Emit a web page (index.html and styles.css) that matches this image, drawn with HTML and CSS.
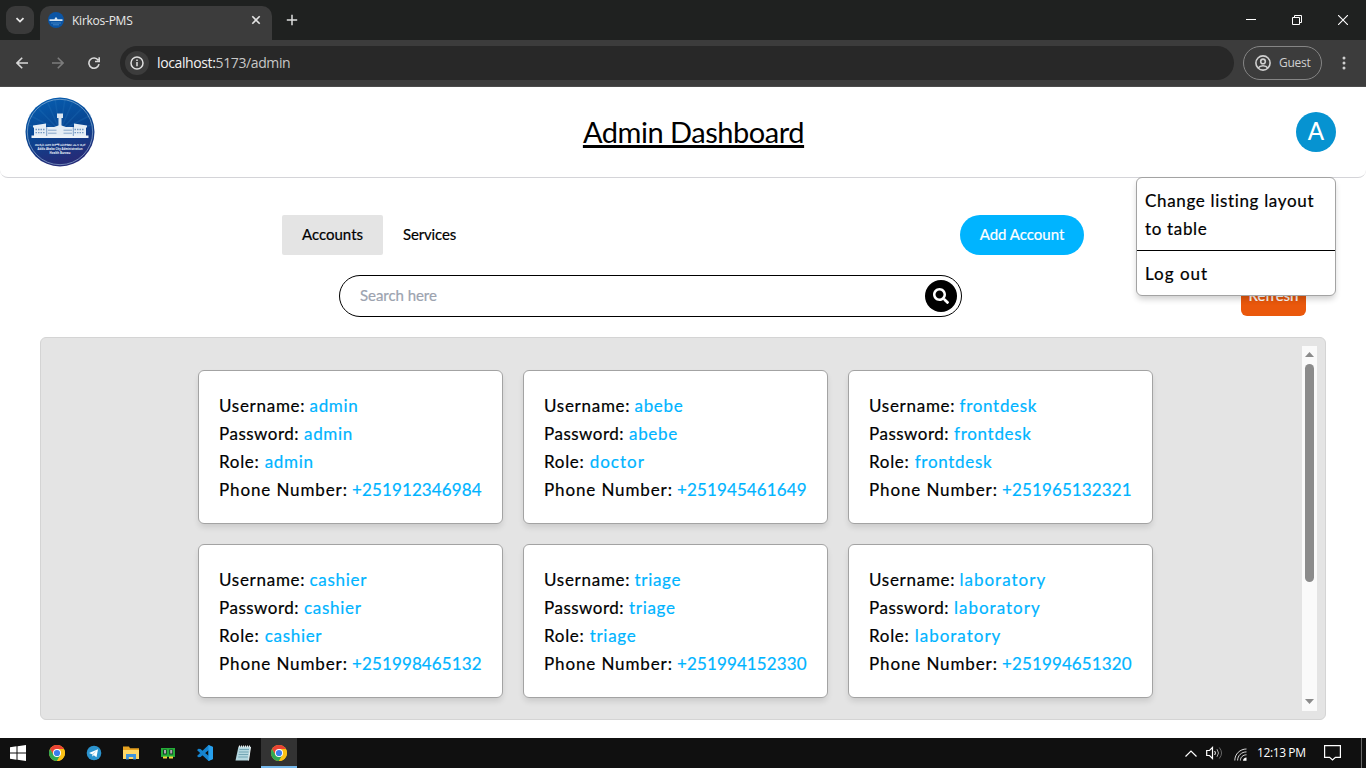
FILE: index.html
```html
<!DOCTYPE html>
<html lang="en">
<head>
<meta charset="utf-8">
<title>Kirkos-PMS</title>
<link rel="stylesheet" href="styles.css">
</head>
<body>
<svg class="defs" width="0" height="0" aria-hidden="true">
  <defs>
    <linearGradient id="sealBlue" x1="0" y1="0" x2="0.3" y2="1"><stop offset="0" stop-color="#0660b4"/><stop offset="0.55" stop-color="#084692"/><stop offset="1" stop-color="#252c78"/></linearGradient>
    <symbol id="chrome" viewBox="0 0 16 16">
      <circle cx="8" cy="8" r="8" fill="#fbc116"/>
      <path d="M1.07 4A8 8 0 0 1 14.93 4H8L4.5 10Z" fill="#ea4335"/>
      <path d="M1.07 4A8 8 0 0 0 8 16L11.5 10H4.54Z" fill="#31a853"/>
      <path d="M14.93 4A8 8 0 0 1 8 16L11.5 10A4 4 0 0 0 8 4Z" fill="#fbc116"/>
      <circle cx="8" cy="8" r="4" fill="#fff"/><circle cx="8" cy="8" r="3.1" fill="#3b7ded"/>
    </symbol>
  </defs>
</svg>
<div class="screen">
  <div class="tabstrip">
    <div class="tab-search"><svg width="10" height="10" viewBox="0 0 10 10"><path d="M1.5 3.2 5 6.6 8.5 3.2" fill="none" stroke="#e8e8e8" stroke-width="1.8"/></svg></div>
    <div class="tab">
      <svg width="16" height="16" viewBox="0 0 16 16"><circle cx="8" cy="8" r="8" fill="#0b55a5"/><path d="M1.500 9V7.300h5l.7-1.800h1.600l.7 1.800h5V9z" fill="#d3e4f3"/><path d="M3 11h10M5 12.800h6" stroke="#4f91cb" stroke-width=".8"/></svg>
      <span class="tab-title">Kirkos-PMS</span>
      <svg class="tab-close" width="10" height="10" viewBox="0 0 10 10"><path d="m1.3 1.3 7.4 7.4m0-7.4L1.3 8.7" stroke="#e3e3e3" stroke-width="1.6"/></svg>
    </div>
    <svg class="new-tab" width="12" height="12" viewBox="0 0 12 12"><path d="M6 .8v10.4M.8 6h10.4" stroke="#dedede" stroke-width="1.5"/></svg>
    <div class="window-buttons">
      <svg width="10" height="10" viewBox="0 0 10 10"><path d="M0 4.5h10" stroke="#fff"/></svg>
      <svg width="10" height="10" viewBox="0 0 10 10"><path d="M.5 2.5h7v7h-7zM2.5 2.5v-2h7v7h-2" fill="none" stroke="#fff"/></svg>
      <svg width="10" height="10" viewBox="0 0 10 10"><path d="m0 0 10 10M10 0 0 10" stroke="#fff" stroke-width="1.1"/></svg>
    </div>
  </div>
  <div class="toolbar">
    <div class="nav">
      <svg width="12" height="12" viewBox="0 0 12 12"><path d="M12 6H1.2M6.2.8 1 6l5.2 5.2" fill="none" stroke="#d8d8d8" stroke-width="1.6"/></svg>
      <svg width="12" height="12" viewBox="0 0 12 12"><path d="M0 6h10.8M5.8.8 11 6l-5.2 5.2" fill="none" stroke="#7c7c7c" stroke-width="1.6"/></svg>
      <svg width="12" height="12" viewBox="0 0 12 12"><path d="M10.2 3.2A5.1 5.1 0 1 0 11 7.2M11.2.3v4.2H7" fill="none" stroke="#d8d8d8" stroke-width="1.6"/></svg>
    </div>
    <div class="omnibox">
      <span class="site-info"><svg width="14" height="14" viewBox="0 0 14 14"><circle cx="7" cy="7" r="6" fill="none" stroke="#dfdfdf" stroke-width="1.5"/><path d="M7 6v4.3M7 3.5v1.6" stroke="#dfdfdf" stroke-width="1.5"/></svg></span>
      <span class="url"><b>localhost:</b>5173/admin</span>
    </div>
    <div class="guest">
      <svg width="16" height="16" viewBox="0 0 16 16" fill="none" stroke="#d0d0d0" stroke-width="1.6"><circle cx="8" cy="8" r="7.1"/><circle cx="8" cy="6.4" r="2.3"/><path d="M3.2 13c2-3 7.6-3 9.600 0"/></svg>
      <span>Guest</span>
    </div>
    <svg class="kebab" width="4" height="14" viewBox="0 0 4 14" fill="#cfcfcf"><circle cx="2" cy="2" r="1.5"/><circle cx="2" cy="7" r="1.5"/><circle cx="2" cy="12" r="1.5"/></svg>
  </div>

  <header class="header">
    <svg class="seal" width="70" height="70" viewBox="0 0 70 70">
      <circle cx="35" cy="35" r="34.5" fill="url(#sealBlue)"/>
      <path d="M35 34 22 4M35 34 30 2M35 34 40 2M35 34 48 4M35 34 12 10M35 34 58 10M35 34 4 18M35 34 66 18M35 34 2 28M35 34 68 28" stroke="#2878bd" stroke-width="1.5" opacity=".25"/>
      <circle cx="35" cy="35" r="32.7" fill="none" stroke="#a5c3dd" stroke-width=".6"/>
      <path d="M33.500 38V21H32v-4.500h6V21h-1.500v17z" fill="#dbe6f1"/>
      <path d="M8 28.500 21 26.500v3.500h8l6-2 6 2h8v-3.500l13 2V30l-1 1v8H9v-8l-1-1z" fill="#e5edf5"/>
      <path d="M6.500 38.500h57V41h-57z" fill="#eef3f8"/>
      <path d="M10.500 32.500h10m-10 3.200h10m29-3.200h10m-10 3.200h10" stroke="#7399c2" stroke-width="1.300" stroke-dasharray="1.500 1"/>
      <path d="M23 33.200h8.500m7 0H47M23 36.200h8.500m7 0H47" stroke="#7b9dc4" stroke-width=".9"/>
      <path d="M21.700 30v9M48.300 30v9" stroke="#4c7bb1" stroke-width=".7"/>
      <text x="35" y="48.800" class="seal-am" textLength="50" lengthAdjust="spacingAndGlyphs">በአዲስ አበባ ከተማ አስተዳደር ጤና ቢሮ</text>
      <text x="35" y="53.2" class="seal-en" textLength="45" lengthAdjust="spacingAndGlyphs">Addis Ababa City Administration</text>
      <text x="35" y="57.200" class="seal-en" textLength="21" lengthAdjust="spacingAndGlyphs">Health Bureau</text>
    </svg>
    <h1>Admin Dashboard</h1>
    <div class="account">
      <div class="avatar">A</div>
      <div class="menu">
        <div class="menu-item">Change listing layout<br>to table</div>
        <div class="menu-item logout">Log out</div>
      </div>
    </div>
  </header>

  <main class="main">
    <div class="tabs-row">
      <div class="tabs"><span class="seg active">Accounts</span><span class="seg services">Services</span></div>
      <button class="add">Add Account</button>
    </div>
    <div class="search-row">
      <div class="search">
        <span class="hint">Search here</span>
        <div class="search-btn"><svg width="16" height="16" viewBox="0 0 512 512" fill="#fff"><path d="M505 442.700 405.300 343c-4.500-4.500-10.600-7-17-7H372c27.600-35.300 44-79.700 44-128C416 93.100 322.900 0 208 0S0 93.100 0 208s93.100 208 208 208c48.300 0 92.700-16.400 128-44v16.300c0 6.400 2.500 12.500 7 17l99.700 99.700c9.400 9.400 24.600 9.400 33.900 0l28.300-28.300c9.400-9.400 9.400-24.600.1-34zM208 336c-70.700 0-128-57.200-128-128 0-70.700 57.200-128 128-128 70.700 0 128 57.200 128 128 0 70.700-57.200 128-128 128z"/></svg></div>
      </div>
      <button class="refresh">Refresh</button>
    </div>
    <section class="panel">
      <div class="cards">
        <article class="card"><p><span class="k user">Username:</span><span class="v">admin</span></p><p><span class="k pass">Password:</span><span class="v">admin</span></p><p><span class="k role">Role:</span><span class="v">admin</span></p><p><span class="k phone">Phone Number:</span><span class="v num">+251912346984</span></p></article>
        <article class="card"><p><span class="k user">Username:</span><span class="v">abebe</span></p><p><span class="k pass">Password:</span><span class="v">abebe</span></p><p><span class="k role">Role:</span><span class="v wide">doctor</span></p><p><span class="k phone">Phone Number:</span><span class="v num">+251945461649</span></p></article>
        <article class="card"><p><span class="k user">Username:</span><span class="v">frontdesk</span></p><p><span class="k pass">Password:</span><span class="v">frontdesk</span></p><p><span class="k role">Role:</span><span class="v">frontdesk</span></p><p><span class="k phone">Phone Number:</span><span class="v num">+251965132321</span></p></article>
        <article class="card"><p><span class="k user">Username:</span><span class="v">cashier</span></p><p><span class="k pass">Password:</span><span class="v">cashier</span></p><p><span class="k role">Role:</span><span class="v">cashier</span></p><p><span class="k phone">Phone Number:</span><span class="v num">+251998465132</span></p></article>
        <article class="card"><p><span class="k user">Username:</span><span class="v">triage</span></p><p><span class="k pass">Password:</span><span class="v">triage</span></p><p><span class="k role">Role:</span><span class="v">triage</span></p><p><span class="k phone">Phone Number:</span><span class="v num">+251994152330</span></p></article>
        <article class="card"><p><span class="k user">Username:</span><span class="v wide">laboratory</span></p><p><span class="k pass">Password:</span><span class="v wide">laboratory</span></p><p><span class="k role">Role:</span><span class="v wide">laboratory</span></p><p><span class="k phone">Phone Number:</span><span class="v num">+251994651320</span></p></article>
      </div>
      <div class="scrollbar">
        <svg width="9" height="5" viewBox="0 0 9 5"><path d="M0 5 4.500 0 9 5z" fill="#8b8b8b"/></svg>
        <div class="thumb"></div>
        <svg class="down" width="9" height="5" viewBox="0 0 9 5"><path d="M0 0h9L4.500 5z" fill="#8b8b8b"/></svg>
      </div>
    </section>
  </main>

  <footer class="taskbar">
    <div class="task start"><svg width="16" height="16" viewBox="0 0 16 16" fill="#fff"><path d="M0 2.200 6.500 1.300v6.200H0zM7.500 1.200 16 0v7.500H7.500zM0 8.500h6.500v6.200L0 13.800zM7.500 8.500H16V16l-8.500-1.200z"/></svg></div>
    <div class="task"><svg width="16" height="16"><use href="#chrome"/></svg></div>
    <div class="task"><svg width="16" height="16" viewBox="0 0 16 16"><circle cx="8" cy="8" r="7.300" fill="#2b93ce"/><path d="m3 7.900 9-3.700-1.500 8-2.700-2-1.400 1.300-.4-2.300z" fill="#fff"/><path d="m6 9.200 4.500-3.500L7 9.800l-.6 1.700z" fill="#a9cbe0"/></svg></div>
    <div class="task"><svg width="16" height="16" viewBox="0 0 16 16"><path d="M0 1.500h6l1 1.800h9V14H0z" fill="#e8a320"/><path d="M0 5h16v9H0z" fill="#ffd867"/><path d="M3 14.500V9h10v5.500h-2.800V12H5.800v2.500z" fill="#3f94dc"/></svg></div>
    <div class="task"><svg width="16" height="16" viewBox="0 0 16 16"><path d="M1 3h14v9H1z" fill="#25ae38"/><path d="M3 4.500h3.800v5H3zM9.200 4.500H13v5H9.200z" fill="#17402a"/><path d="M4 5h2v3.500H4zM10.200 5h2v3.500h-2z" fill="#b0a8b0"/><path d="M3 11.500h4v2H3zM9 11.500h4v2H9z" fill="#f6d93c"/></svg></div>
    <div class="task"><svg width="16" height="16" viewBox="0 0 16 16"><path d="m11.500 0 4.500 2v12l-4.500 2L1 5.900 0 5.100l1.500-1.300 2 .1 8 6.800V5.300L3.500 12.100l-2 .1L0 10.900z" fill="#1684cf"/><path d="m11.500 0 4.500 2v12l-4.500 2z" fill="#27a0ee"/></svg></div>
    <div class="task"><svg width="16" height="16" viewBox="0 0 16 16"><path d="M3.500 1.500H15.500L13.500 15.500H.5z" fill="#b4d7df"/><path d="m4.500 4.500 9.500 0M4 7h9.500M3.600 9.500h9.500M3.300 12h9.500" stroke="#73a5b4"/><path d="M4 1.500h11.500" stroke="#eee" stroke-width="2" stroke-dasharray="1 1"/><path d="M15.500 2 13.500 15.500" stroke="#eef5f6"/></svg></div>
    <div class="task running"><svg width="16" height="16"><use href="#chrome"/></svg></div>
    <div class="tray">
      <svg width="12" height="7" viewBox="0 0 12 7"><path d="M.5 6.500 6 1l5.500 5.500" fill="none" stroke="#fff" stroke-width="1.200"/></svg>
      <svg class="vol" width="17" height="14" viewBox="0 0 17 14" fill="none" stroke="#fff"><path d="M.7 4.500h2.800L6.500 1.500v11L3.500 9.500H.7z" stroke-width="1.200"/><path d="M8.700 5q1.500 2 0 4"/><path d="M11 3.200q3 3.800 0 7.600" stroke="#aaa"/><path d="M13.300 1.500q4.500 5.500 0 11" stroke="#666"/></svg>
      <svg class="wifi" width="13" height="13" viewBox="0 0 13 13" fill="none" stroke="#d9d9d9"><path d="M.8 12.500C.8 6 6 1 12.500 1M3.600 12.500c0-5 4-8.600 8.900-8.600M6.400 12.500c0-3.400 2.700-5.700 6.100-5.700"/><path d="M9 12.800c0-2 1.500-3.300 3.500-3.300v3.300z" fill="#fff" stroke="none"/></svg>
      <span class="clock">12:13 PM</span>
      <svg class="note" width="17" height="16" viewBox="0 0 17 16"><path d="M.6.6h15.800v11.800h-5L8.500 15l-2.900-2.600h-5z" fill="none" stroke="#fff" stroke-width="1.200"/></svg>
    </div>
  </footer>
</div>
</body>
</html>
```
FILE: styles.css
```css
* { box-sizing: border-box; }
body { margin: 0; background: #fff; font-family: "Gill Sans MT", Lato, sans-serif; color: #000; }
p, h1 { margin: 0; }
svg { display: block; flex: none; }
button { border: 0; font: inherit; padding: 0; }
.defs { position: absolute; }
.screen { width: 1366px; height: 768px; display: flex; flex-direction: column; overflow: hidden; }

.tabstrip { height: 40px; flex: none; background: #1f2120; display: flex; align-items: flex-start; padding: 6px 18px 0 6px; }
.tab-search { width: 28px; height: 28px; border-radius: 9px; background: #3a3a3a; display: grid; place-items: center; }
.tab { width: 232px; height: 34px; margin-left: 6px; border-radius: 10px 10px 0 0; background: #3c3c3c; display: flex; align-items: center; padding: 0 11px 6px 8px; }
.tab-title { margin-left: 8px; font: 12px "Open Sans", sans-serif; letter-spacing: -.25px; color: #e8e8e8; }
.tab-close { margin-left: auto; }
.new-tab { margin: 8px 0 0 14px; }
.window-buttons { margin: 9px 0 0 auto; display: flex; gap: 36px; }

.toolbar { height: 47px; flex: none; background: #3c3c3c; border-bottom: 1px solid #4b4b4b; display: flex; align-items: center; padding: 0 20px 0 16px; }
.nav { display: flex; gap: 24px; width: 104px; }
.omnibox { width: 1114px; height: 34px; border-radius: 17px; background: #282828; display: flex; align-items: center; padding-left: 5px; }
.site-info { width: 24px; height: 24px; border-radius: 50%; background: #3c3c3c; display: grid; place-items: center; }
.url { margin-left: 8px; padding-bottom: 1px; font: 14px "Open Sans", sans-serif; letter-spacing: -.38px; color: #c7c7c7; }
.url b { font-weight: 400; color: #f2f2f2; }
.guest { margin-left: 9px; width: 79px; height: 34px; border: 1px solid #858585; border-radius: 17px; display: flex; align-items: center; padding-left: 11px; gap: 8px; font: 12px "Open Sans", sans-serif; letter-spacing: -.25px; color: #d0d0d0; }
.guest span { padding-bottom: 1px; }
.kebab { margin-left: auto; }

.header { height: 91px; flex: none; border-bottom: 1px solid #d4d4d8; border-radius: 0 0 8px 8px; display: flex; align-items: center; justify-content: space-between; padding: 0 30px 0 25px; }
.seal-am, .seal-en { fill: #e9eff8; text-anchor: middle; font: bold 3.600px "Noto Sans", sans-serif; }
.header h1 { font-size: 29px; font-weight: 400; line-height: 36px; letter-spacing: -.46px; text-decoration: underline; text-decoration-thickness: 3px; text-underline-offset: 2px; margin-left: -4px; padding-bottom: 1px; }
.account { position: relative; }
.avatar { width: 40px; height: 40px; padding-bottom: 3px; border-radius: 50%; background: #0693d1; color: #fff; display: grid; place-items: center; font-size: 24px; font-weight: 500; }
.menu { position: absolute; top: 65px; right: 0; z-index: 2; width: 200px; background: #fff; border: 1px solid #a3a3a3; border-radius: 6px; box-shadow: 0 4px 6px -1px rgba(0,0,0,.2); font-size: 17px; line-height: 28px; letter-spacing: .67px; white-space: nowrap; -webkit-text-stroke: .2px #000; }
.menu-item { padding: 9px 8px 7px; }
.menu-item + .menu-item { border-top: 1px solid #000; }
.logout { letter-spacing: 1px; }

.main { flex: 1; display: flex; flex-direction: column; padding: 37px 40px 18px; }
.tabs-row { display: flex; justify-content: space-between; margin: 0 242px; height: 40px; }
.tabs { display: flex; font-size: 15px; line-height: 39px; -webkit-text-stroke: .2px #000; }
.seg { padding: 0 20px; }
.seg.active { background: #e4e4e4; border-radius: 2px; width: 101px; }
.services { letter-spacing: -.15px; }
.add { width: 124px; height: 40px; padding-bottom: 2px; border-radius: 20px; background: #00b4ff; color: #fff; font-size: 15px; -webkit-text-stroke: .2px #fff; }
.search-row { display: flex; justify-content: space-between; align-items: flex-end; margin: 20px 20px 20px 299px; }
.search { width: 623px; height: 42px; border: 1px solid #000; border-radius: 21px; display: flex; align-items: center; justify-content: space-between; padding: 0 4px 0 20px; color: #9ca3af; font-size: 15px; letter-spacing: -.05px; }
.hint { padding-bottom: 2px; -webkit-text-stroke: .2px #9ca3af; }
.search-btn { width: 32px; height: 32px; border-radius: 50%; background: #000; display: grid; place-items: center; }
.refresh { width: 65px; height: 40px; padding-bottom: 2px; margin-bottom: 1px; border-radius: 6px; background: #ea580c; color: #fff; font-size: 15px; -webkit-text-stroke: .2px #fff; }

.panel { height: 383px; border: 1px solid #d4d4d4; border-radius: 6px; background: #e4e4e4; display: flex; justify-content: space-between; padding: 8px 8px 8px 157px; }
.cards { display: grid; grid-template-columns: repeat(3, 305px); grid-auto-rows: 154px; gap: 20px; padding-top: 24px; }
.card { background: #fff; border: 1px solid #a3a3a3; border-radius: 6px; box-shadow: 0 4px 6px -1px rgba(0,0,0,.12); padding: 21px 20px 19px; font-size: 17px; line-height: 28px; letter-spacing: .6px; white-space: nowrap; }
.card p { display: flex; }
.k { -webkit-text-stroke: .2px #000; }
.user { width: 90.500px; letter-spacing: .72px; }
.pass { width: 85px; letter-spacing: .5px; }
.role { width: 45.700px; letter-spacing: .7px; }
.phone { width: 133px; letter-spacing: .88px; }
.v { color: #00b4ff; -webkit-text-stroke: .2px #00b4ff; letter-spacing: .7px; }
.wide { letter-spacing: 1px; }
.num { letter-spacing: .12px; }
.scrollbar { width: 15px; background: #fafafa; display: flex; flex-direction: column; align-items: center; padding: 6px 0 7px; }
.thumb { width: 9px; height: 218px; margin-top: 7px; border-radius: 5px; background: #8b8b8b; }
.down { margin-top: auto; }

.taskbar { height: 30px; flex: none; background: #101010; display: flex; padding-right: 4px; }
.task { width: 37.200px; display: grid; place-items: center; }
.task.start { width: 36px; margin-right: 2px; }
.task.running { width: 36px; background: #333; border-bottom: 2px solid #76b9ed; padding-top: 2px; }
.tray { margin-left: auto; display: flex; align-items: center; border-right: 1px solid #686868; padding-right: 20px; }
.vol { margin-left: 9px; }
.wifi { margin: 3px 0 0 11px; }
.clock { margin-left: 10px; width: 67px; padding-bottom: 1px; font: 12px "Open Sans", sans-serif; letter-spacing: -.4px; color: #fff; }
```
